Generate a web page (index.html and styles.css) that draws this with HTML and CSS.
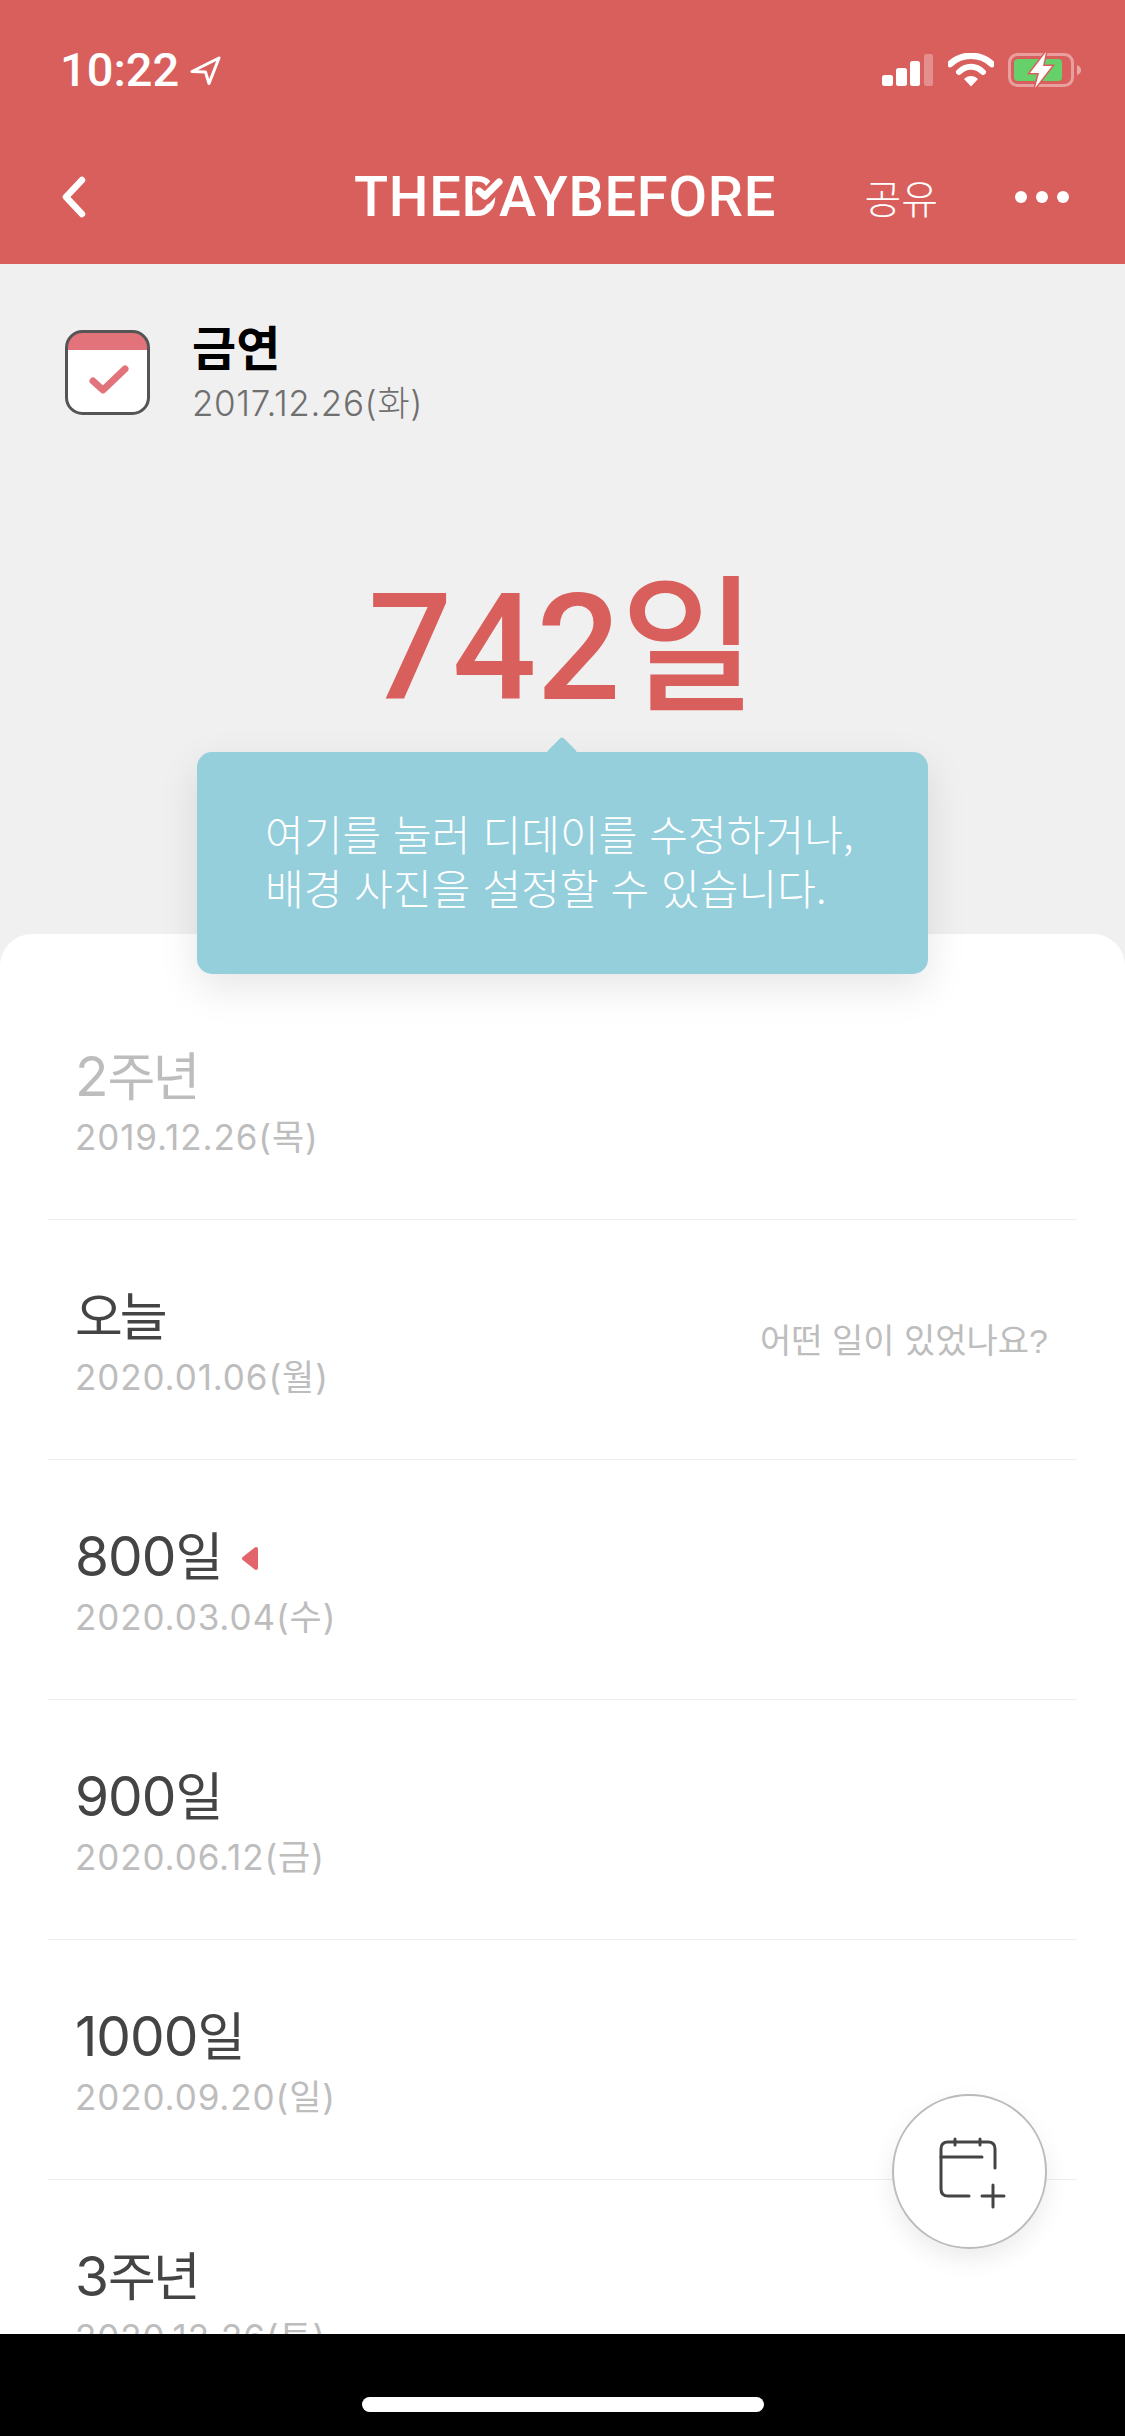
FILE: index.html
```html
<!DOCTYPE html>
<html lang="ko">

<head>
    <meta charset="UTF-8">
    <meta name="viewport" content="width=device-width, initial-scale=1.0">
    <title>THEDAYBEFORE</title>
    <link rel="stylesheet" href="styles.css">
</head>

<body>
    <div class="app">
        <header class="top">
            <div class="status">
                <div class="status-left">
                    <span class="time">10:22</span>
                    <svg class="loc" width="31" height="29" viewBox="0 0 31 29">
                        <path d="M29 2 L2 15.5 L15.5 16 L19 27.5 Z" fill="none" stroke="#fff" stroke-width="3" stroke-linejoin="round" />
                    </svg>
                </div>
                <div class="status-right">
                    <svg width="52" height="32" viewBox="0 0 52 32">
                        <rect x="0" y="21" width="11" height="11" rx="2.5" fill="#fff" />
                        <rect x="14" y="14" width="11" height="18" rx="2.5" fill="#fff" />
                        <rect x="28" y="7" width="10" height="25" rx="2.5" fill="#fff" />
                        <rect x="42" y="0" width="9" height="32" rx="2.5" fill="#fff" fill-opacity=".3" />
                    </svg>
                    <svg class="wifi" width="46" height="34" viewBox="0 0 46 34">
                        <path d="M2 11 C14 0 32 0 44 11" fill="none" stroke="#fff" stroke-width="6.5" stroke-linecap="round" />
                        <path d="M11 19 C18 12 28 12 35 19" fill="none" stroke="#fff" stroke-width="6" stroke-linecap="round" />
                        <path d="M16 26 C20 22 26 22 30 26 L23 33.5 Z" fill="#fff" />
                    </svg>
                    <svg class="battery" width="74" height="36" viewBox="0 0 74 36">
                        <rect x="1.5" y="2.5" width="63" height="31" rx="8" fill="none" stroke="#fff" stroke-opacity=".4" stroke-width="3" />
                        <rect x="6" y="7" width="48" height="22" rx="4" fill="#66d06a" />
                        <path d="M69 13 C72 14 73 16 73 18 C73 20 72 22 69 23 Z" fill="#fff" fill-opacity=".45" />
                        <path d="M38 0 L22 21 L31 21 L27 36 L44 14 L35 14 Z" fill="#fff" stroke="#d95f5c" stroke-width="3" paint-order="stroke" />
                    </svg>
                </div>
            </div>
            <nav class="nav">
                <div class="nav-left">
                    <svg width="25" height="42" viewBox="0 0 25 42">
                        <path d="M21 4 L5 21 L21 38" fill="none" stroke="#fff" stroke-width="6.5" stroke-linecap="round" stroke-linejoin="round" />
                    </svg>
                </div>
                <div class="logo">THE<span class="logo-d">D<svg class="logo-check" width="34" height="34" viewBox="0 0 34 34">
                            <path d="M6 17 L13 24 L28 7" fill="none" stroke="#d95f5c" stroke-width="14" stroke-linecap="round" stroke-linejoin="round" />
                            <path d="M7 17 L13 22 L27 8" fill="none" stroke="#fff" stroke-width="7" stroke-linecap="round" stroke-linejoin="round" />
                        </svg></span>AYBEFORE</div>
                <div class="nav-right">
                    <span class="share">공유</span>
                    <span class="dots"><i></i><i></i><i></i></span>
                </div>
            </nav>
        </header>

        <section class="summary">
            <div class="event">
                <svg class="event-icon" width="85" height="85" viewBox="0 0 85 85">
                    <rect x="1.5" y="1.5" width="82" height="82" rx="16" fill="#fff" />
                    <path d="M1.5 20 V17.5 A16 16 0 0 1 17.5 1.5 H67.5 A16 16 0 0 1 83.5 17.5 V20 Z" fill="#e2737a" />
                    <rect x="1.5" y="1.5" width="82" height="82" rx="16" fill="none" stroke="#555" stroke-width="3" />
                    <path d="M28 51 L38 60 L60 39" fill="none" stroke="#e2737a" stroke-width="7" stroke-linecap="round" stroke-linejoin="round" />
                </svg>
                <div class="event-text">
                    <div class="event-title">금연</div>
                    <div class="event-date">2017.12.26(화)</div>
                </div>
            </div>
            <div class="dday">742일</div>
        </section>

        <section class="panel">
            <div class="row row-past">
                <div class="row-title">2<span class="ko">주년</span></div>
                <div class="row-date">2019.12.26(목)</div>
            </div>
            <div class="row">
                <div class="row-title"><span class="ko">오늘</span></div>
                <div class="row-date">2020.01.06(월)</div>
                <div class="row-note">어떤 일이 있었나요?</div>
            </div>
            <div class="row">
                <div class="row-title">800<span class="ko">일</span>
                    <svg class="marker" width="18" height="25" viewBox="0 0 18 25">
                        <path d="M15 3 V22 L3 12.5 Z" fill="#e2656b" stroke="#e2656b" stroke-width="4" stroke-linejoin="round" />
                    </svg>
                </div>
                <div class="row-date">2020.03.04(수)</div>
            </div>
            <div class="row">
                <div class="row-title">900<span class="ko">일</span></div>
                <div class="row-date">2020.06.12(금)</div>
            </div>
            <div class="row">
                <div class="row-title">1000<span class="ko">일</span></div>
                <div class="row-date">2020.09.20(일)</div>
            </div>
            <div class="row">
                <div class="row-title">3<span class="ko">주년</span></div>
                <div class="row-date">2020.12.26(토)</div>
            </div>
        </section>

        <footer class="home">
            <div class="home-bar"></div>
        </footer>

        <div class="tooltip">
            여기를 눌러 디데이를 수정하거나,<br>
            배경 사진을 설정할 수 있습니다.
        </div>

        <button class="fab">
            <svg width="72" height="76" viewBox="0 0 72 76">
                <path d="M31 62 H10 Q3 62 3 55 V15 Q3 8 10 8 H50 Q57 8 57 15 V34" fill="none" stroke="#444" stroke-width="3" stroke-linecap="round" />
                <path d="M3 23 H44 M17 5 V11 M42 5 V11" fill="none" stroke="#444" stroke-width="3" stroke-linecap="round" />
                <path d="M44 62 H66 M55 51 V73" fill="none" stroke="#444" stroke-width="3" stroke-linecap="round" />
            </svg>
        </button>
    </div>
</body>

</html>
```

FILE: styles.css
```css
* {
    box-sizing: border-box;
}

body {
    margin: 0;
    font-family: "Liberation Sans", "Noto Sans CJK KR", sans-serif;
    background-color: #f0f0f0;
}

.app {
    position: relative;
    display: flex;
    flex-direction: column;
    width: 1125px;
    height: 2436px;
    overflow: hidden;
}

/* status bar + nav */
.top {
    height: 264px;
    flex-shrink: 0;
    background-color: #d95f5c;
    color: #fff;
}

.status {
    display: flex;
    justify-content: space-between;
    align-items: center;
    height: 52px;
    padding: 44px 43px 0 60px;
    box-sizing: content-box;
}

.status-left {
    display: flex;
    align-items: center;
    gap: 11px;
}

.time {
    font-family: "Roboto", sans-serif;
    font-weight: 500;
    font-size: 47px;
    line-height: 52px;
}

.status-right {
    display: flex;
    align-items: center;
    gap: 14px;
}

.nav {
    display: grid;
    grid-template-columns: 1fr auto 1fr;
    align-items: center;
    margin-top: 69px;
    padding: 0 56px 0 61px;
}

.nav-left svg {
    display: block;
}

.logo {
    font-family: "Roboto", sans-serif;
    font-weight: 500;
    font-size: 56px;
    line-height: 64px;
    letter-spacing: 0.7px;
    white-space: nowrap;
}

.logo-d {
    position: relative;
}

.logo-check {
    position: absolute;
    left: 10px;
    top: 10px;
}

.nav-right {
    display: flex;
    justify-content: flex-end;
    align-items: center;
    gap: 77px;
}

.share {
    font-size: 40px;
    font-weight: 300;
}

.dots {
    display: flex;
    gap: 9px;
}

.dots i {
    width: 12px;
    height: 12px;
    border-radius: 50%;
    background-color: #fff;
}

/* grey area */
.summary {
    height: 670px;
    flex-shrink: 0;
    padding: 57px 0 0 65px;
}

.event {
    display: flex;
    align-items: center;
    gap: 42px;
}

.event-icon {
    flex-shrink: 0;
}

.event-title {
    font-size: 48px;
    line-height: 58px;
    font-weight: 700;
    color: #000;
}

.event-date {
    margin-top: 4px;
    font-family: "Inter", "Noto Sans CJK KR", sans-serif;
    font-weight: 300;
    font-size: 35px;
    line-height: 40px;
    letter-spacing: 0.6px;
    color: #6f6f6f;
}

.dday {
    margin: 141px 65px 0 0;
    font-family: "Roboto", "Noto Sans CJK KR", sans-serif;
    font-size: 148px;
    line-height: 170px;
    font-weight: 500;
    text-align: center;
    color: #d95f5c;
}

/* list */
.panel {
    flex: 1;
    min-height: 0;
    overflow: hidden;
    padding-top: 46px;
    background-color: #fff;
    border-radius: 32px 32px 0 0;
}

.row {
    position: relative;
    height: 240px;
    margin: 0 48px;
    padding: 64px 0 0 27px;
    border-bottom: 1px solid #eeeeee;
}

.row-title {
    font-family: "Inter", "Noto Sans CJK KR", sans-serif;
    font-size: 55px;
    line-height: 64px;
    letter-spacing: -1px;
    color: #444;
}

.ko {
    font-size: 52px;
    letter-spacing: -3px;
}

.row-past .row-title {
    color: #bdbdbd;
}

.row-date {
    margin-top: 5px;
    font-family: "Inter", "Noto Sans CJK KR", sans-serif;
    font-size: 35px;
    line-height: 44px;
    letter-spacing: 0.9px;
    color: #bdbdbd;
}

.row-note {
    position: absolute;
    right: 29px;
    top: 99px;
    font-size: 34px;
    line-height: 44px;
    color: #bdbdbd;
}

.marker {
    margin-left: 6px;
    vertical-align: 5px;
}

.home {
    height: 102px;
    flex-shrink: 0;
    display: flex;
    justify-content: center;
    background-color: #000;
}

.home-bar {
    width: 402px;
    height: 15px;
    margin-top: 63px;
    border-radius: 8px;
    background-color: #fff;
}

/* hint over the summary */
.tooltip {
    position: absolute;
    left: 197px;
    top: 752px;
    width: 731px;
    height: 222px;
    padding: 54px 0 0 68px;
    background-color: #95cfdc;
    border-radius: 15px;
    box-shadow: 0 14px 40px rgba(0, 0, 0, 0.1);
    color: #fff;
    font-family: "Noto Sans CJK KR", sans-serif;
    font-weight: 300;
    font-size: 42px;
    line-height: 54px;
    letter-spacing: 0.1px;
}

.tooltip::before {
    content: "";
    position: absolute;
    left: 354px;
    top: -11px;
    width: 22px;
    height: 22px;
    background-color: #95cfdc;
    border-radius: 3px;
    transform: rotate(45deg);
}

.fab {
    position: absolute;
    left: 892px;
    top: 2094px;
    display: flex;
    justify-content: center;
    align-items: center;
    width: 155px;
    height: 155px;
    padding: 0 0 0 9px;
    background-color: #fff;
    border: 2px solid #bbb;
    border-radius: 50%;
    box-shadow: 0 10px 24px rgba(0, 0, 0, 0.08);
}
```
